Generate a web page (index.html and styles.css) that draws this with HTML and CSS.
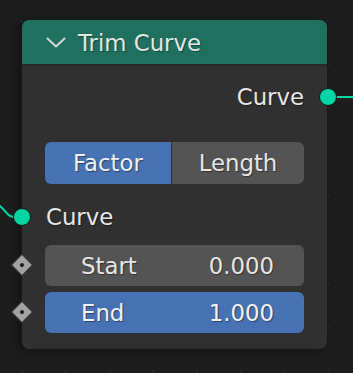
FILE: index.html
```html
<!DOCTYPE html>
<html>
<head>
<meta charset="utf-8">
<link rel="stylesheet" href="styles.css">
</head>
<body>
<div class="canvas">
  <svg class="links" width="353" height="373" viewBox="0 0 353 373">
    <path d="M336 97 L353 97" stroke="#00d6a3" stroke-width="2" fill="none"/>
    <path d="M-6 202 C6 208 6 217 14 217" stroke="#00d6a3" stroke-width="2" fill="none"/>
  </svg>
  <div class="node">
    <div class="header">
      <svg class="chevron" width="20" height="12" viewBox="0 0 20 12">
        <path d="M1.5 1.5 L10 9.5 L18.5 1.5" stroke="#d4d4d4" stroke-width="2" fill="none" stroke-linecap="round" stroke-linejoin="round"/>
      </svg>
      <span class="title">Trim Curve</span>
    </div>
    <div class="body">
      <div class="row out">
        <span class="label">Curve</span>
        <span class="socket socket-right"></span>
      </div>
      <div class="toggle">
        <div class="opt opt-on">Factor</div>
        <div class="opt opt-off">Length</div>
      </div>
      <div class="row in">
        <span class="socket socket-left"></span>
        <span class="label">Curve</span>
      </div>
      <div class="field field-gray">
        <span class="diamond"></span>
        <span class="flabel">Start</span>
        <span class="fval">0.000</span>
      </div>
      <div class="field field-blue">
        <span class="diamond"></span>
        <span class="flabel">End</span>
        <span class="fval">1.000</span>
      </div>
    </div>
  </div>
</div>
</body>
</html>
```

FILE: styles.css
```css
html, body {
  margin: 0;
  padding: 0;
}
body {
  width: 353px;
  height: 373px;
  overflow: hidden;
  background-color: #1d1d1d;
  background-image: radial-gradient(circle at center, #2a2a2a 0, #2a2a2a 1px, transparent 1.6px);
  background-size: 43.75px 43.75px;
  background-position: 0.125px -0.875px;
  font-family: "DejaVu Sans", sans-serif;
  color: #e6e6e6;
}
.canvas {
  position: relative;
  width: 353px;
  height: 373px;
  padding: 20px 0 0 22px;
  box-sizing: border-box;
}
.links {
  position: absolute;
  left: 0;
  top: 0;
}
.node {
  position: relative;
  width: 305px;
  height: 329px;
  background: #303030;
  border-radius: 7px;
  box-shadow: 0 0 0 1px #181818, -4px 2px 10px rgba(0, 0, 0, 0.35);
  display: flex;
  flex-direction: column;
}
.header {
  height: 44px;
  background: #1f705e;
  border-radius: 7px 7px 0 0;
  border-bottom: 2px solid #232a28;
  display: flex;
  align-items: center;
  padding-left: 24px;
  box-sizing: content-box;
}
.chevron {
  margin-top: 1px;
}
.title {
  margin-left: 12px;
  font-size: 22.8px;
  color: #e0e7e4;
  text-shadow: 1px 1px 1px rgba(0, 0, 0, 0.35);
  margin-top: 1px;
}
.body {
  display: flex;
  flex-direction: column;
  padding: 12px 23px 16px 23px;
}
.row {
  position: relative;
  height: 38px;
  display: flex;
  align-items: center;
  font-size: 22.8px;
  text-shadow: 1px 1px 1px rgba(0, 0, 0, 0.4);
}
.out {
  justify-content: flex-end;
}
.in {
  margin-top: 14px;
}
.in .label {
  margin-left: 1px;
}
.socket {
  position: absolute;
  width: 16px;
  height: 16px;
  border-radius: 50%;
  background: #00d6a3;
  border: 1.5px solid #161616;
  top: 9.5px;
}
.socket-right {
  right: -32.5px;
}
.socket-left {
  left: -32.5px;
}
.toggle {
  margin-top: 26px;
  height: 42px;
  display: flex;
  gap: 1px;
  font-size: 22.8px;
  text-shadow: 1px 1px 1px rgba(0, 0, 0, 0.4);
}
.opt {
  display: flex;
  align-items: center;
  justify-content: center;
}
.opt-on {
  width: 126px;
  background: #4772b3;
  border-radius: 6px 0 0 6px;
  color: #f0f0f0;
}
.opt-off {
  flex: 1;
  background: #545454;
  border-radius: 0 6px 6px 0;
}
.field {
  position: relative;
  height: 41px;
  border-radius: 6px;
  display: flex;
  align-items: center;
  font-size: 22.8px;
  text-shadow: 1px 1px 1px rgba(0, 0, 0, 0.4);
  padding: 0 30px 0 36px;
}
.field-gray {
  margin-top: 9px;
  background: #545454;
}
.field-blue {
  margin-top: 6px;
  background: #4772b3;
  color: #f2f2f2;
}
.flabel {
  flex: 1;
}
.diamond {
  position: absolute;
  left: -31px;
  top: 12px;
  width: 14px;
  height: 14px;
  background: #a3a3a3;
  border: 1.5px solid #181818;
  transform: rotate(45deg);
}
.diamond::after {
  content: "";
  position: absolute;
  left: 5px;
  top: 5px;
  width: 4px;
  height: 4px;
  border-radius: 50%;
  background: #1e1e1e;
}
```
